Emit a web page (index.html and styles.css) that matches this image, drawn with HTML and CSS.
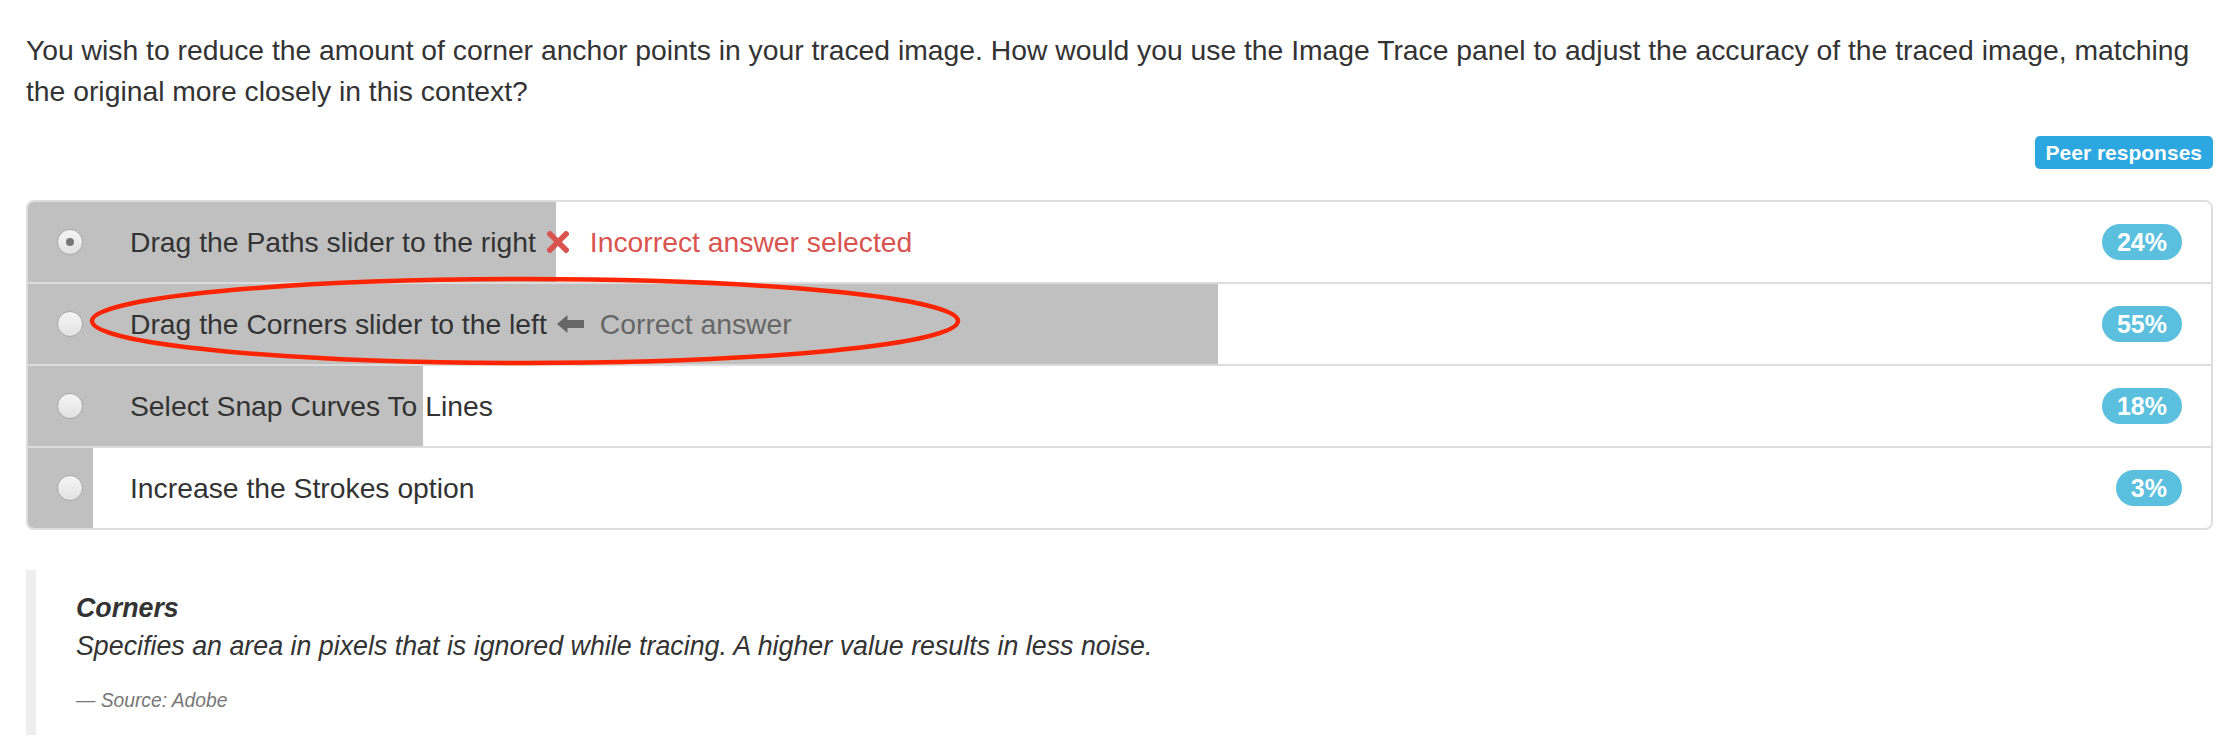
FILE: index.html
```html
<!DOCTYPE html>
<html lang="en">
<head>
<meta charset="utf-8">
<title>Image Trace question</title>
<link rel="stylesheet" href="styles.css">
</head>
<body>
<div class="page">
  <p class="question">You wish to reduce the amount of corner anchor points in your traced image. How would you use the Image Trace panel to adjust the accuracy of the traced image, matching the original more closely in this context?</p>

  <div class="toolbar"><span class="peer">Peer responses</span></div>

  <div class="answers">
    <div class="answer" style="--pct:24.2%">
      <span class="radio checked"></span>
      <span class="label">Drag the Paths slider to the right</span>
      <span class="feedback wrong">
        <svg class="x-icon" viewBox="0 0 22 22" aria-hidden="true"><path d="M3 3 L19 19 M19 3 L3 19" stroke="#d9534f" stroke-width="5.5" stroke-linecap="square" fill="none"/></svg>
        Incorrect answer selected
      </span>
      <span class="badge">24%</span>
    </div>
    <div class="answer" style="--pct:54.5%">
      <span class="radio"></span>
      <span class="label">Drag the Corners slider to the left</span>
      <span class="feedback right">
        <svg class="arrow-icon" viewBox="0 0 27 18" aria-hidden="true"><path d="M0 9 L10.5 0 L10.5 5 L27 5 L27 13 L10.5 13 L10.5 18 Z" fill="#666"/></svg>
        Correct answer
      </span>
      <span class="badge">55%</span>
    </div>
    <div class="answer" style="--pct:18.1%">
      <span class="radio"></span>
      <span class="label">Select Snap Curves To Lines</span>
      <span class="badge">18%</span>
    </div>
    <div class="answer" style="--pct:3%">
      <span class="radio"></span>
      <span class="label">Increase the Strokes option</span>
      <span class="badge">3%</span>
    </div>
    <svg class="circle-mark" viewBox="0 0 880 96" aria-hidden="true"><ellipse cx="440" cy="48" rx="433" ry="42" fill="none" stroke="#ff2400" stroke-width="4.5"/></svg>
  </div>

  <blockquote class="note">
    <div class="note-title">Corners</div>
    <div class="note-text">Specifies an area in pixels that is ignored while tracing. A higher value results in less noise.</div>
    <div class="source">— Source: Adobe</div>
  </blockquote>
</div>
</body>
</html>
```

FILE: styles.css
```css
html, body {
  margin: 0;
  background: #fff;
}
body {
  font-family: "Liberation Sans", Arial, Helvetica, sans-serif;
  color: #333;
}
.page {
  padding: 30px 15px 0 26px;
}
.question {
  margin: 0;
  font-size: 28.3px;
  line-height: 41px;
}
.toolbar {
  display: flex;
  justify-content: flex-end;
  margin-top: 24px;
}
.peer {
  background: #2ca7df;
  color: #fff;
  font-weight: bold;
  font-size: 21px;
  height: 33px;
  line-height: 33px;
  padding: 0 11px;
  border-radius: 5px;
}
.answers {
  position: relative;
  margin-top: 31px;
  border: 2px solid #ddd;
  border-radius: 8px;
  overflow: hidden;
}
.answer {
  display: flex;
  align-items: center;
  height: 80px;
  padding: 0 29px;
  font-size: 28.3px;
  background: linear-gradient(to right, #c0c0c0 var(--pct), #fff var(--pct));
}
.answer + .answer {
  border-top: 2px solid #ddd;
}
.radio {
  flex: none;
  width: 26px;
  height: 26px;
  box-sizing: border-box;
  border-radius: 50%;
  border: 1px solid #a8a8a8;
  background: linear-gradient(#f5f5f5, #e2e2e2);
  margin-right: 47px;
  display: flex;
  align-items: center;
  justify-content: center;
}
.radio.checked::after {
  content: "";
  width: 8px;
  height: 8px;
  border-radius: 50%;
  background: #777;
}
.label {
  white-space: nowrap;
}
.feedback {
  display: flex;
  align-items: center;
  white-space: nowrap;
}
.feedback.wrong {
  color: #d9534f;
}
.feedback.right {
  color: #666;
}
.x-icon {
  width: 22px;
  height: 22px;
  margin: 0 21px 0 11px;
}
.arrow-icon {
  width: 27px;
  height: 18px;
  margin: 0 16px 0 10px;
}
.badge {
  margin-left: auto;
  background: #5bc0de;
  color: #fff;
  font-weight: bold;
  font-size: 25px;
  height: 36px;
  line-height: 36px;
  padding: 0 15px;
  border-radius: 18px;
}
.circle-mark {
  position: absolute;
  left: 57px;
  top: 71px;
  width: 880px;
  height: 96px;
  pointer-events: none;
}
.note {
  margin: 40px 0 0 0;
  border-left: 10px solid #eee;
  padding: 19px 40px 21px;
}
.note-title {
  font-weight: bold;
  font-style: italic;
  font-size: 26.8px;
  line-height: 38px;
}
.note-text {
  font-style: italic;
  font-size: 26.8px;
  line-height: 38px;
}
.source {
  margin-top: 22px;
  font-style: italic;
  color: #777;
  font-size: 19.3px;
  line-height: 27px;
}
```
